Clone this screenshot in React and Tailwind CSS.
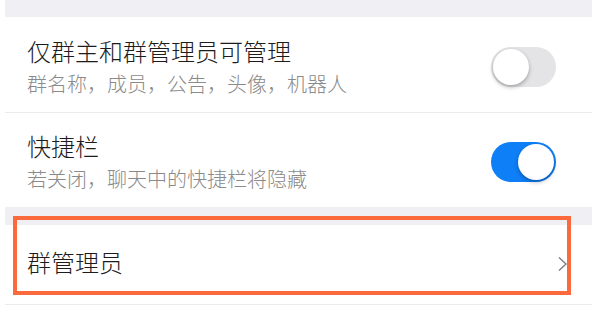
import { useState } from 'react'

const font = { fontFamily: '"Noto Sans CJK SC", "Noto Sans", sans-serif' }

function Toggle({ on, onChange }) {
    return (
        <button
            onClick={onChange}
            className={`relative w-[65px] h-[40px] rounded-full shrink-0 ${on ? 'bg-[#0f7ff8]' : 'bg-[#e4e4e7]'}`}
        >
            <span
                className={`absolute top-[2px] w-[36px] h-[36px] rounded-full bg-white shadow-[0_2px_4px_rgba(0,0,0,0.3)] ${on ? 'left-[27px]' : 'left-[2px]'}`}
            />
        </button>
    )
}

function SwitchRow({ title, desc, on, onChange, pt }) {
    return (
        <div className={`flex items-center justify-between pl-[22px] pr-[36px] pb-[15px] ${pt}`}>
            <div className="flex flex-col gap-[5px]">
                <div className="text-[24px] leading-[30px] font-light text-[#1c1c1c]">{title}</div>
                <div className="text-[20px] leading-[26px] font-light text-[#8a8a8a]">{desc}</div>
            </div>
            <Toggle on={on} onChange={onChange} />
        </div>
    )
}

export default function App() {
    const [adminOnly, setAdminOnly] = useState(false)
    const [quickBar, setQuickBar] = useState(true)

    return (
        <div className="w-[600px] h-[313px] bg-white overflow-hidden" style={font}>
            <div className="relative ml-[5px] w-[587px]">
                <div className="h-[17px] bg-[#efeff4]" />
                <SwitchRow
                    title="仅群主和群管理员可管理"
                    desc="群名称，成员，公告，头像，机器人"
                    on={adminOnly}
                    onChange={() => setAdminOnly(!adminOnly)}
                    pt="pt-[19px]"
                />
                <div className="h-px bg-[#ebebeb]" />
                <SwitchRow
                    title="快捷栏"
                    desc="若关闭，聊天中的快捷栏将隐藏"
                    on={quickBar}
                    onChange={() => setQuickBar(!quickBar)}
                    pt="pt-[18px]"
                />
                <div className="h-[18px] bg-[#efeff4]" />
                <div className="flex items-center justify-between h-[79px] pl-[22px] pr-[24px] pb-[5px]">
                    <span className="text-[24px] leading-[30px] font-light text-[#1c1c1c]">群管理员</span>
                    <svg width="11" height="16" viewBox="0 0 11 16" fill="none" className="mt-[3px]">
                        <polyline points="2,1.5 9,8 2,14.5" stroke="#7d7d82" strokeWidth="1.4" />
                    </svg>
                </div>
                <div className="h-px bg-[#ebebeb]" />

                {/* highlight annotation */}
                <div className="absolute left-[8px] top-[216px] w-[558px] h-[79px] border-[4px] border-[#fa6a3c] pointer-events-none" />
            </div>
        </div>
    )
}
